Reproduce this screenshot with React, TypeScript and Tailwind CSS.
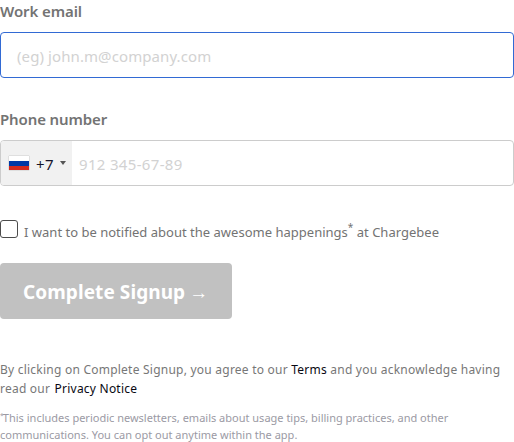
export default function App() {
  return (
    <form className="w-[514px] h-[442px] overflow-hidden bg-white font-['Noto_Sans',sans-serif] text-[#737373]">
      <label className="block h-8 text-[15px] leading-[22px] font-semibold tracking-[-0.1px]">Work email</label>
      <input className="block h-[46px] w-full rounded-[4px] border border-[#326ad4] px-4 pt-[2px] text-[15px] tracking-[0.09px] placeholder:text-[#d2d2d2] outline-none" placeholder="(eg) john.m@company.com" />
      <label className="mt-[30px] block h-8 text-[15px] leading-[22px] font-semibold tracking-[-0.12px]">Phone number</label>
      <div className="flex h-[46px] overflow-hidden rounded-[4px] border border-[#ccc]">
        <div className="flex w-[71px] items-center bg-[#f1f1f1] pl-2 text-[15px] text-[#151329]">
          <span className="flex h-[14px] w-5 flex-col shadow-[0_0_1px_#888]">
            <span className="h-[5px] bg-white" /><span className="h-[5px] bg-[#0039a6]" /><span className="h-[4px] bg-[#d52b1e]" />
          </span>
          <span className="ml-[7px] w-[18px] pt-[2px] tracking-[0.4px]">+7</span>
          <span className="ml-[6px] border-x-[3px] border-t-4 border-x-transparent border-t-[#555]" />
        </div>
        <input className="min-w-0 flex-1 px-[7px] pt-[3px] text-[15px] tracking-[0.33px] placeholder:text-[#d2d2d2] outline-none" placeholder="912 345-67-89" />
      </div>
      <div className="mt-[34px] flex h-[18px]">
        <span className="h-[18px] w-[18px] rounded-[3px] border border-[#4c4c4c]" />
        <span className="ml-[6px] whitespace-nowrap text-[13px] leading-6 tracking-[0.01px]">I want to be notified about the awesome happenings<sup className="-top-[6px] text-[10px]">*</sup> at Chargebee</span>
      </div>
      <button className="mt-[25px] flex h-14 w-[232px] items-center rounded-[4px] bg-[#c1c1c1] pl-[23px] text-[19px] font-bold text-white">
        <span className="pt-[2px] tracking-[0.08px]">Complete Signup</span>
        <span className="ml-[4px] pt-px text-[19px] font-normal leading-6">→</span>
      </button>
      <p className="mt-[41px] whitespace-nowrap text-[12px] leading-[19px] tracking-[0.23px] text-[#777]">By clicking on Complete Signup, you agree to our <a className="text-[#080812]">Terms</a> and you acknowledge having<br />read our <a className="ml-px text-[#080812]">Privacy Notice</a></p>
      <p className="mt-[11px] whitespace-nowrap text-[11px] leading-[17px] text-[#9b9aa4]"><sup className="-top-[4px] -mr-px text-[7px]">*</sup>This includes periodic newsletters, emails about usage tips, billing practices, and other<br />communications. You can opt out anytime within the app.</p>
    </form>
  );
}
